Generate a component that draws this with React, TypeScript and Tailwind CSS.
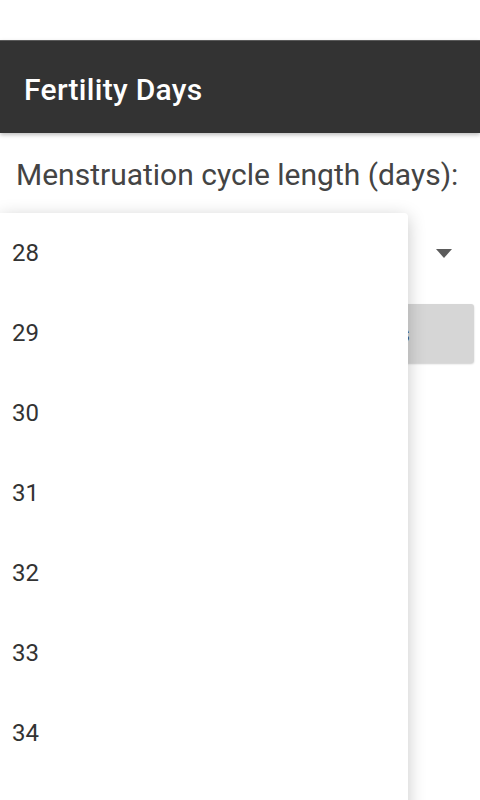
import React from "react";

const DAYS = [28, 29, 30, 31, 32, 33, 34];

const App = () => {
  return (
    <div className="relative w-[480px] h-[800px] overflow-hidden bg-white font-['Roboto',sans-serif]">
      {/* Status area */}
      <div className="h-[40px] bg-white" />

      {/* Toolbar */}
      <header className="h-[93px] bg-[#333333] flex items-center px-6 pt-[4px] shadow-[0_2px_4px_rgba(0,0,0,0.25)] border-t border-[#5a5a5a]">
        <h1 className="text-white text-[30px] font-medium tracking-[0.3px]">Fertility Days</h1>
      </header>

      {/* Form behind the open menu */}
      <main className="px-4">
        <p className="mt-[23px] text-[30px] leading-[38px] text-[#444444]">
          Menstruation cycle length (days):
        </p>
        <div className="mt-[20px] h-[80px] flex items-start justify-end pr-[12px] pt-[35px]">
          <svg width="16" height="10" viewBox="0 0 16 10">
            <path d="M0 0 L16 0 L8 9 Z" fill="#5b5b5b" />
          </svg>
        </div>
        <div className="mt-[10px] flex justify-end -mr-[10px]">
          <button className="w-[240px] h-[59px] rounded-[3px] bg-[#d6d6d6] text-[#333] text-[24px] shadow-[0_1px_2px_rgba(0,0,0,0.2)] text-right pr-[64px]">
            Calculate days
          </button>
        </div>
      </main>

      {/* Open dropdown menu */}
      <ul className="absolute left-0 top-[213px] w-[408px] h-[620px] bg-white rounded-tr-[4px] shadow-[0_4px_18px_rgba(0,0,0,0.22)]">
        {DAYS.map((d) => (
          <li key={d} className="h-[80px] flex items-center px-3 text-[24px] text-[#333333]">
            {d}
          </li>
        ))}
      </ul>
    </div>
  );
};

export default App;
